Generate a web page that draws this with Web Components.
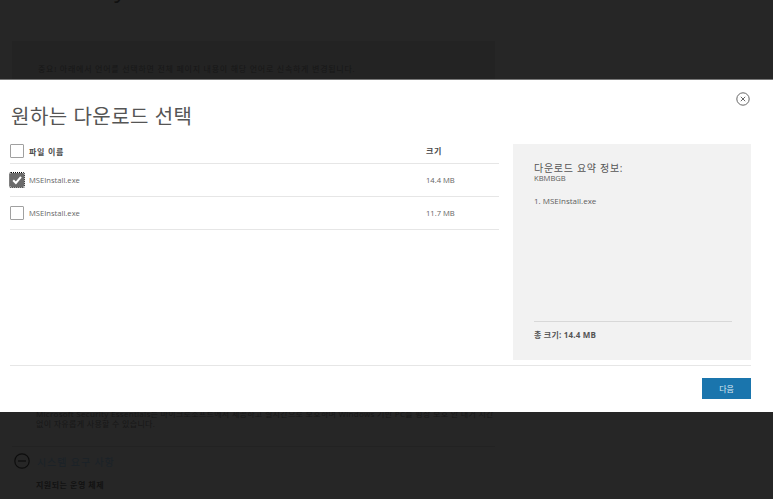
<!DOCTYPE html>
<html lang="ko">
<head>
<meta charset="utf-8">
<title>다운로드 선택</title>
<style>
html, body { margin: 0; height: 100%; }
body { width: 773px; height: 499px; overflow: hidden; position: relative; background: #262626; font-family: "Open Sans", "Noto Sans CJK KR", sans-serif; }
</style>
</head>
<body>

<back-page></back-page>

<download-dialog>
  <file-row slot="rows" header name="파일 이름" size="크기"></file-row>
  <file-row slot="rows" checked name="MSEInstall.exe" size="14.4 MB"></file-row>
  <file-row slot="rows" name="MSEInstall.exe" size="11.7 MB"></file-row>
</download-dialog>

<script>
// the dimmed page behind the dialog
var template_backpage = document.createElement("template");
template_backpage.innerHTML = `
<style>
:host { display: block; height: 499px; overflow: hidden; color: #141414; font-size: 8px; }
h1 { margin: -27px 0 0 37px; height: 30px; font-size: 24px; line-height: 30px; font-weight: 400; color: #111; }
.notice { margin: 38px 0 0 12px; width: 483px; height: 120px; box-sizing: border-box; padding: 22px 26px; background: #232323; line-height: 12px; letter-spacing: .74px; color: #171717; }
.desc { margin: 248px 0 0 36px; width: 458px; line-height: 10px; letter-spacing: .3px; color: #171717; }
.line { margin: 17px 0 0 12px; width: 483px; height: 1px; background: #222; }
.sys { display: flex; align-items: center; gap: 7px; margin: 6px 0 0 14px; font-size: 10px; letter-spacing: .9px; color: #1a2228; }
.sys svg { display: block; }
h3 { margin: 10px 0 0 36px; font-size: 8px; font-weight: 700; letter-spacing: .5px; color: #121212; }
</style>
<h1>Security</h1>
<div class="notice">중요! 아래에서 언어를 선택하면 전체 페이지 내용이 해당 언어로 신속하게 변경됩니다.</div>
<div class="desc">Microsoft Security Essentials는 마이크로소프트에서 제공하고 실시간으로 보호하며 Windows 기반 PC를 평상 보호 안 내거 시간<br>없이 자유롭게 사용할 수 있습니다.</div>
<div class="line"></div>
<div class="sys">
  <svg width="16" height="16" viewBox="0 0 16 16" fill="none" stroke="#0d0d0d" stroke-width="1.2"><circle cx="8" cy="8" r="7.2"/><path d="M4 8h8"/></svg>
  <span>시스템 요구 사항</span>
</div>
<h3>지원되는 운영 체제</h3>
`;
class BackPage extends HTMLElement {
  constructor(){
    super();
    this.attachShadow({mode:"open"});
    this.shadowRoot.appendChild(template_backpage.content.cloneNode(true));
  }
}
customElements.define("back-page", BackPage);

// one row of the file table
var template_filerow = document.createElement("template");
template_filerow.innerHTML = `
<style>
:host { display: grid; grid-template-columns: 416px 1fr; align-items: center; height: 33px; box-sizing: border-box; border-bottom: 1px solid #e6e6e6; font-size: 7.6px; color: #666; }
:host([header]) { height: 20px; align-items: start; font-size: 8px; font-weight: 700; letter-spacing: .7px; color: #4a4a4a; }
.name { display: flex; align-items: center; gap: 5px; }
.box { width: 12px; height: 12px; border: 1px solid #a0a0a0; border-radius: 1px; background: #fff; flex: none; }
:host([checked]) .box { background: #6a6a6a; border-color: #6a6a6a; outline: 1px dotted #000; outline-offset: 0; display: flex; }
.box svg { display: none; }
:host([checked]) .box svg { display: block; }
:host([header]) .label, :host([header]) .size { padding-top: 1px; }
</style>
<div class="name">
  <div class="box"><svg width="12" height="12" viewBox="0 0 12 12" fill="none" stroke="#fff" stroke-width="2"><path d="M2.2 6.2 4.9 9 10 2.8"/></svg></div>
  <span class="label"></span>
</div>
<div class="size"></div>
`;
class FileRow extends HTMLElement {
  constructor(){
    super();
    this.attachShadow({mode:"open"});
  }
  connectedCallback(){
    this.shadowRoot.appendChild(template_filerow.content.cloneNode(true));
    this.shadowRoot.querySelector(".label").textContent = this.getAttribute("name");
    this.shadowRoot.querySelector(".size").textContent = this.getAttribute("size");
  }
}
customElements.define("file-row", FileRow);

// the white dialog, lies over the page
var template_dialog = document.createElement("template");
template_dialog.innerHTML = `
<style>
:host { display: block; position: absolute; left: 0; top: 79px; width: 773px; height: 333px; box-sizing: border-box; background: #fff; border-top: 1px solid #777; padding: 0 22px 0 10px; }
.close { position: absolute; top: 12px; left: 736px; display: block; }
h2 { margin: 0 0 0 1px; padding-top: 22px; height: 42px; font-size: 20px; line-height: 30px; font-weight: 400; letter-spacing: .5px; color: #555; }
.main { display: flex; gap: 14px; height: 216px; }
.files { width: 489px; }
.summary { width: 238px; box-sizing: border-box; padding: 18px 19px 0 21px; background: #f2f2f2; display: flex; flex-direction: column; color: #606060; font-size: 8px; }
.title { font-size: 10px; line-height: 12px; letter-spacing: .7px; color: #555; }
.unit { font-size: 7.6px; line-height: 8px; }
.item { margin-top: 13px; line-height: 12px; }
.total { margin-top: auto; border-top: 1px solid #d8d8d8; height: 39px; padding-top: 7px; box-sizing: border-box; font-weight: 700; line-height: 12px; color: #555; letter-spacing: .2px; }
.foot { margin-top: 5px; border-top: 1px solid #e6e6e6; display: flex; justify-content: flex-end; padding-top: 12px; }
button { width: 49px; height: 21px; border: 0; padding: 0; background: #1a75ad; color: #dbe9f2; font: 8px "Noto Sans CJK KR", sans-serif; }
</style>
<svg class="close" width="14" height="14" viewBox="0 0 14 14" fill="none" stroke="#666"><circle cx="7" cy="7" r="6.2"/><path d="M4.8 4.8l4.4 4.4M9.2 4.8l-4.4 4.4"/></svg>
<h2>원하는 다운로드 선택</h2>
<div class="main">
  <div class="files"><slot name="rows"></slot></div>
  <div class="summary">
    <div class="title">다운로드 요약 정보:</div>
    <div class="unit">KBMBGB</div>
    <div class="item">1. MSEInstall.exe</div>
    <div class="total">총 크기: 14.4 MB</div>
  </div>
</div>
<div class="foot"><button>다음</button></div>
`;
class DownloadDialog extends HTMLElement {
  constructor(){
    super();
    this.attachShadow({mode:"open"});
    this.shadowRoot.appendChild(template_dialog.content.cloneNode(true));
  }
}
customElements.define("download-dialog", DownloadDialog);
</script>
</body>
</html>
